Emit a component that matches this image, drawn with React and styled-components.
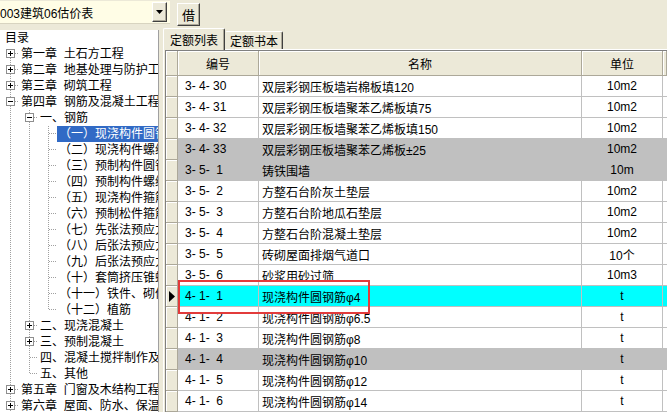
import React from 'react';
import styled, { createGlobalStyle } from 'styled-components';

const GlobalStyle = createGlobalStyle`
  html, body {
    margin: 0;
    padding: 0;
  }
  body {
    font-family: "Liberation Sans", "Noto Sans CJK SC", sans-serif;
    font-size: 12px;
    color: #000;
    background: #ece9d8;
  }
`;

const tree = [
  { level: 0, text: '目录' },
  { level: 1, text: '第一章  土石方工程', box: 'plus', first: true },
  { level: 1, text: '第二章  地基处理与防护工程', box: 'plus' },
  { level: 1, text: '第三章  砌筑工程', box: 'plus' },
  { level: 1, text: '第四章  钢筋及混凝土工程', box: 'minus' },
  { level: 2, text: '一、钢筋', box: 'minus', guides: [1] },
  { level: 3, text: '（一）现浇构件圆钢筋', guides: [1, 1], selected: true },
  { level: 3, text: '（二）现浇构件螺纹钢筋', guides: [1, 1] },
  { level: 3, text: '（三）预制构件圆钢筋', guides: [1, 1] },
  { level: 3, text: '（四）预制构件螺纹钢筋', guides: [1, 1] },
  { level: 3, text: '（五）现浇构件箍筋', guides: [1, 1] },
  { level: 3, text: '（六）预制松件箍筋', guides: [1, 1] },
  { level: 3, text: '（七）先张法预应力钢筋', guides: [1, 1] },
  { level: 3, text: '（八）后张法预应力钢筋', guides: [1, 1] },
  { level: 3, text: '（九）后张法预应力钢丝', guides: [1, 1] },
  { level: 3, text: '（十）套筒挤压锥螺纹', guides: [1, 1] },
  { level: 3, text: '（十一）铁件、砌体加固', guides: [1, 1] },
  { level: 3, text: '（十二）植筋', guides: [1, 1], last: true },
  { level: 2, text: '二、现浇混凝土', box: 'plus', guides: [1] },
  { level: 2, text: '三、预制混凝土', box: 'plus', guides: [1] },
  { level: 2, text: '四、混凝土搅拌制作及泵送', guides: [1] },
  { level: 2, text: '五、其他', guides: [1], last: true },
  { level: 1, text: '第五章  门窗及木结构工程', box: 'plus' },
  { level: 1, text: '第六章  屋面、防水、保温及防腐工程', box: 'plus' },
];

const rows = [
  { code: '3- 4- 30', name: '双层彩钢压板墙岩棉板填120', unit: '10m2' },
  { code: '3- 4- 31', name: '双层彩钢压板墙聚苯乙烯板填75', unit: '10m2' },
  { code: '3- 4- 32', name: '双层彩钢压板墙聚苯乙烯板填150', unit: '10m2' },
  { code: '3- 4- 33', name: '双层彩钢压板墙聚苯乙烯板±25', unit: '10m2', tone: 'gray' },
  { code: '3- 5-  1', name: '铸铁围墙', unit: '10m', tone: 'gray' },
  { code: '3- 5-  2', name: '方整石台阶灰土垫层', unit: '10m2' },
  { code: '3- 5-  3', name: '方整石台阶地瓜石垫层', unit: '10m2' },
  { code: '3- 5-  4', name: '方整石台阶混凝土垫层', unit: '10m2' },
  { code: '3- 5-  5', name: '砖砌屋面排烟气道口', unit: '10个' },
  { code: '3- 5-  6', name: '砂浆用砂过筛', unit: '10m3' },
  { code: '4- 1-  1', name: '现浇构件圆钢筋φ4', unit: 't', tone: 'cyan', current: true, marked: true },
  { code: '4- 1-  2', name: '现浇构件圆钢筋φ6.5', unit: 't' },
  { code: '4- 1-  3', name: '现浇构件圆钢筋φ8', unit: 't' },
  { code: '4- 1-  4', name: '现浇构件圆钢筋φ10', unit: 't', tone: 'gray' },
  { code: '4- 1-  5', name: '现浇构件圆钢筋φ12', unit: 't' },
  { code: '4- 1-  6', name: '现浇构件圆钢筋φ14', unit: 't' },
];

const toneColors = { gray: '#c0c0c0', cyan: '#00ffff' };
const COLS = '12px 81px 323px 81px 1fr';

const Window = styled.div`
  width: 667px;
  height: 412px;
  display: flex;
  flex-direction: column;
  overflow: hidden;
  background: #ece9d8;
`;

const TopBar = styled.div`
  height: 28px;
  display: flex;
  align-items: flex-start;
  padding-top: 1px;
  box-sizing: border-box;
`;

const Combo = styled.div`
  width: 170px;
  height: 23px;
  display: flex;
  align-items: center;
  background: #fffde6;
  box-sizing: border-box;
  border-bottom: 1px solid #d8d4c0;
`;

const ComboText = styled.span`
  flex: 1;
  font-size: 12px;
  white-space: nowrap;
  overflow: hidden;
`;

const ClassicButton = styled.div`
  box-sizing: border-box;
  display: flex;
  align-items: center;
  justify-content: center;
  background: #ece9d8;
  border-top: 1px solid #fff;
  border-left: 1px solid #fff;
  border-right: 1px solid #404040;
  border-bottom: 1px solid #404040;
  box-shadow: inset -1px -1px 0 #aca899;
`;

const DropButton = styled(ClassicButton)`
  width: 15px;
  height: 20px;
  margin-right: 3px;
`;

const BorrowButton = styled(ClassicButton)`
  width: 23px;
  height: 23px;
  margin: 2px 0 0 7px;
  font-size: 13px;
`;

const Main = styled.div`
  flex: 1;
  display: flex;
  min-height: 0;
`;

const TreePanel = styled.div`
  width: 159px;
  margin-top: 2px;
  box-sizing: border-box;
  background: #fff;
  border-right: 1px solid #a0a0a0;
  overflow: hidden;
`;

const TreeRow = styled.div`
  height: 16px;
  display: flex;
  align-items: center;
  white-space: pre;
  padding-left: ${({ $root }) => ($root ? '3px' : '0')};
`;

const TreeLabel = styled.span`
  height: 16px;
  line-height: 16px;
  padding: 0 2px;
  background: ${({ $selected }) => ($selected ? '#316ac5' : 'transparent')};
  color: ${({ $selected }) => ($selected ? '#fff' : '#000')};
  flex-shrink: 0;
`;

const TabArea = styled.div`
  flex: 1;
  margin-left: 4px;
  display: flex;
  flex-direction: column;
  min-width: 0;
`;

const TabStrip = styled.div`
  height: 21px;
  display: flex;
  align-items: flex-end;
  position: relative;
  z-index: 1;
`;

const Tab = styled.div`
  box-sizing: border-box;
  height: ${({ $active }) => ($active ? '22px' : '18px')};
  margin-bottom: ${({ $active }) => ($active ? '-1px' : '0')};
  padding: 0 ${({ $active }) => ($active ? '6px' : '4px')};
  display: flex;
  align-items: center;
  background: #ece9d8;
  border-top: 1px solid #fff;
  border-left: 1px solid ${({ $active }) => ($active ? '#fff' : 'transparent')};
  border-right: 1px solid #404040;
  box-shadow: inset -1px 0 0 #aca899;
  border-radius: 2px 2px 0 0;
  font-size: 12px;
`;

const TabPage = styled.div`
  flex: 1;
  display: flex;
  flex-direction: column;
  border-top: 1px solid #fff;
  border-left: 1px solid #fff;
  padding-left: 1px;
  min-height: 0;
`;

const Grid = styled.div`
  flex: 1;
  background: #fff;
  border-left: 1px solid #808080;
  border-top: 1px solid #808080;
  overflow: hidden;
`;

const HeaderRow = styled.div`
  display: grid;
  grid-template-columns: ${COLS};
  height: 25px;
`;

const HeaderCell = styled.div`
  box-sizing: border-box;
  display: flex;
  align-items: center;
  justify-content: center;
  background: #ece9d8;
  border-right: 1px solid #aca899;
  border-bottom: 1px solid #aca899;
  box-shadow: inset 1px 1px 0 #fff;
`;

const Row = styled.div`
  display: grid;
  grid-template-columns: ${COLS};
  height: 21px;
  position: relative;
`;

const Indicator = styled.div`
  box-sizing: border-box;
  display: flex;
  align-items: center;
  padding-left: 3px;
  background: #ece9d8;
  border-right: 1px solid #aca899;
  border-bottom: 1px solid #aca899;
  box-shadow: inset 1px 1px 0 #fff;
`;

const Cell = styled.div`
  box-sizing: border-box;
  display: flex;
  align-items: center;
  justify-content: ${({ $center }) => ($center ? 'center' : 'flex-start')};
  padding-left: ${({ $pad }) => $pad || 0}px;
  white-space: pre;
  overflow: hidden;
  background: ${({ $tone }) => toneColors[$tone] || '#fff'};
  border-right: ${({ $last }) => ($last ? 'none' : '1px solid #c0c0c0')};
  border-bottom: 1px solid #c0c0c0;
`;

const Marker = styled.div`
  position: absolute;
  left: 12px;
  top: -6px;
  width: 192px;
  height: 34px;
  box-sizing: border-box;
  border: 2px solid #e23b3b;
  z-index: 2;
  pointer-events: none;
`;

const dot = { stroke: '#a0a0a0', strokeWidth: 1, strokeDasharray: '1 1' };

const Connector = ({ box, first, last }) => (
  <svg width="19" height="16" style={{ flexShrink: 0 }}>
    {!first && <line x1="10.5" y1="0" x2="10.5" y2="8" {...dot} />}
    {!last && <line x1="10.5" y1="8" x2="10.5" y2="16" {...dot} />}
    <line x1="11" y1="7.5" x2="19" y2="7.5" {...dot} />
    {box && (
      <>
        <rect x="6.5" y="3.5" width="8" height="8" fill="#fff" stroke="#8e8e8e" />
        <line x1="8" y1="7.5" x2="13" y2="7.5" stroke="#000" />
        {box === 'plus' && <line x1="10.5" y1="5" x2="10.5" y2="10" stroke="#000" />}
      </>
    )}
  </svg>
);

const Guide = ({ on }) => (
  <svg width="19" height="16" style={{ flexShrink: 0 }}>
    {on && <line x1="10.5" y1="0" x2="10.5" y2="16" {...dot} />}
  </svg>
);

const Arrow = () => (
  <svg width="7" height="4">
    <polygon points="0,0 7,0 3.5,4" fill="#000" />
  </svg>
);

const RowPointer = () => (
  <svg width="6" height="11">
    <polygon points="0,0 6,5.5 0,11" fill="#000" />
  </svg>
);

export default function App() {
  return (
    <Window>
      <GlobalStyle />
      <TopBar>
        <Combo>
          <ComboText>003建筑06估价表</ComboText>
          <DropButton>
            <Arrow />
          </DropButton>
        </Combo>
        <BorrowButton>借</BorrowButton>
      </TopBar>
      <Main>
        <TreePanel>
          {tree.map((node, i) => (
            <TreeRow key={i} $root={node.level === 0}>
              {(node.guides || []).map((g, j) => (
                <Guide key={j} on={!!g} />
              ))}
              {node.level > 0 && (
                <Connector box={node.box} first={node.first} last={node.last} />
              )}
              <TreeLabel $selected={node.selected}>{node.text}</TreeLabel>
            </TreeRow>
          ))}
        </TreePanel>
        <TabArea>
          <TabStrip>
            <Tab $active>定额列表</Tab>
            <Tab>定额书本</Tab>
          </TabStrip>
          <TabPage>
            <Grid>
              <HeaderRow>
                <HeaderCell />
                <HeaderCell>编号</HeaderCell>
                <HeaderCell>名称</HeaderCell>
                <HeaderCell>单位</HeaderCell>
                <HeaderCell />
              </HeaderRow>
              {rows.map((r) => (
                <Row key={r.code}>
                  <Indicator>{r.current && <RowPointer />}</Indicator>
                  <Cell $tone={r.tone} $pad={7}>{r.code}</Cell>
                  <Cell $tone={r.tone} $pad={3}>{r.name}</Cell>
                  <Cell $tone={r.tone} $center>{r.unit}</Cell>
                  <Cell $tone={r.tone} $last />
                  {r.marked && <Marker />}
                </Row>
              ))}
            </Grid>
          </TabPage>
        </TabArea>
      </Main>
    </Window>
  );
}
